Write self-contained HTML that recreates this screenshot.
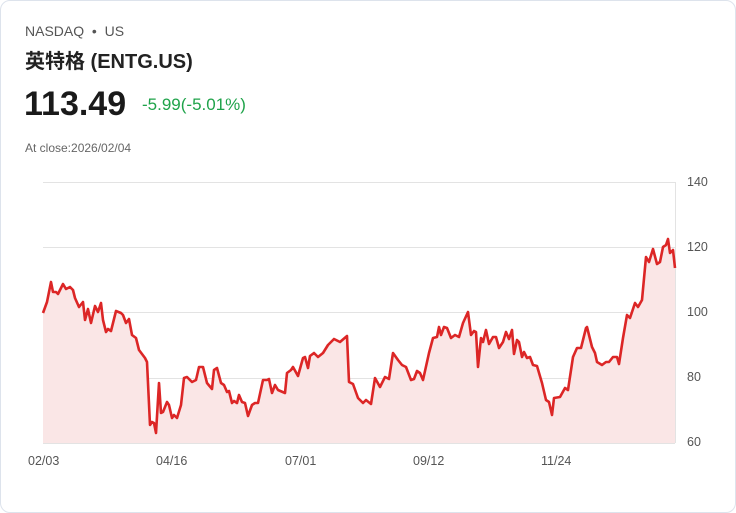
<!DOCTYPE html>
<html><head><meta charset="utf-8"><style>
body{margin:0;width:736px;height:513px;background:#fff;font-family:"Liberation Sans","Noto Sans CJK SC",sans-serif;overflow:hidden}
.card{position:absolute;left:0;top:0;width:734px;height:511px;border:1px solid #dde3ec;border-radius:10px}
.t{position:absolute;white-space:nowrap}
</style></head><body>
<div class="card"></div>
<div class="t" style="left:25px;top:23px;font-size:14px;color:#555">NASDAQ &nbsp;•&nbsp; US</div>
<div class="t" style="left:25px;top:45px;font-size:20px;font-weight:bold;color:#222">英特格 (ENTG.US)</div>
<div class="t" style="left:24px;top:85px;font-size:34px;font-weight:bold;color:#1a1a1a">113.49</div>
<div class="t" style="left:142px;top:95px;font-size:17px;color:#1fa34a">-5.99(-5.01%)</div>
<div class="t" style="left:25px;top:141px;font-size:12px;color:#666">At close:2026/02/04</div>
<svg width="736" height="513" style="position:absolute;left:0;top:0">
<g stroke="#e3e3e3" stroke-width="1">
<line x1="43" y1="182.5" x2="675" y2="182.5"/><line x1="43" y1="247.5" x2="675" y2="247.5"/><line x1="43" y1="312.5" x2="675" y2="312.5"/><line x1="43" y1="378.5" x2="675" y2="378.5"/><line x1="43" y1="443.5" x2="675" y2="443.5"/><line x1="675.5" y1="182" x2="675.5" y2="443"/>
</g>
<g font-size="12.5" fill="#555" font-family="Liberation Sans,sans-serif">
<text x="687" y="186">140</text><text x="687" y="251">120</text><text x="687" y="316">100</text><text x="687" y="381">80</text><text x="687" y="446">60</text>
<text x="28" y="465">02/03</text><text x="156" y="465">04/16</text><text x="285" y="465">07/01</text><text x="413" y="465">09/12</text><text x="541" y="465">11/24</text>
</g>
<polyline fill="#fae6e6" stroke="none" points="43,443 43,313 47,302 51,282 53,292 56,292 58,294 63,284 66,289 70,287 73,290 75,298 79,307 83,302 85,320 88,309 91,323 95,306 98,312 101,303 103,320 106,332 108,329 111,331 116,311 121,313 123,315 126,323 129,319 132,335 136,338 139,350 145,358 147,362 150,425 152,422 154,423 156,433 159,383 161,413 163,412 167,402 169,405 172,418 174,415 177,418 181,405 184,378 187,377 192,382 196,380 199,367 203,367 207,383 212,389 214,370 217,368 221,383 224,385 227,392 229,391 232,403 234,401 237,403 239,395 242,402 245,403 248,416 252,405 255,403 258,403 263,380 267,380 269,379 272,393 275,385 278,390 285,393 287,373 291,370 293,367 298,376 303,358 305,357 308,368 310,356 314,353 318,357 323,353 328,345 334,339 340,342 347,336 349,382 353,384 358,398 363,403 366,400 371,404 375,378 380,387 385,377 389,379 393,353 398,360 402,365 406,367 411,380 414,379 417,371 420,373 423,380 429,353 433,338 437,337 439,327 441,335 444,327 447,328 451,338 455,335 459,337 463,323 468,312 471,335 474,331 476,332 478,367 481,338 483,342 486,330 489,344 493,337 496,337 499,348 503,342 506,332 509,339 512,330 514,354 517,340 519,342 522,357 524,352 527,358 530,357 533,365 537,366 542,383 546,400 549,402 552,415 554,398 560,397 565,388 568,390 573,357 577,348 581,348 586,328 587,327 592,347 595,353 597,362 602,365 606,362 609,362 613,357 617,357 619,364 623,338 627,315 630,318 635,303 638,307 642,300 646,257 649,262 653,249 657,264 660,262 663,247 666,245 668,239 670,253 673,250 675,268 675,443"/>
<polyline fill="none" stroke="#dc2626" stroke-width="2.6" stroke-linejoin="round" points="43,313 47,302 51,282 53,292 56,292 58,294 63,284 66,289 70,287 73,290 75,298 79,307 83,302 85,320 88,309 91,323 95,306 98,312 101,303 103,320 106,332 108,329 111,331 116,311 121,313 123,315 126,323 129,319 132,335 136,338 139,350 145,358 147,362 150,425 152,422 154,423 156,433 159,383 161,413 163,412 167,402 169,405 172,418 174,415 177,418 181,405 184,378 187,377 192,382 196,380 199,367 203,367 207,383 212,389 214,370 217,368 221,383 224,385 227,392 229,391 232,403 234,401 237,403 239,395 242,402 245,403 248,416 252,405 255,403 258,403 263,380 267,380 269,379 272,393 275,385 278,390 285,393 287,373 291,370 293,367 298,376 303,358 305,357 308,368 310,356 314,353 318,357 323,353 328,345 334,339 340,342 347,336 349,382 353,384 358,398 363,403 366,400 371,404 375,378 380,387 385,377 389,379 393,353 398,360 402,365 406,367 411,380 414,379 417,371 420,373 423,380 429,353 433,338 437,337 439,327 441,335 444,327 447,328 451,338 455,335 459,337 463,323 468,312 471,335 474,331 476,332 478,367 481,338 483,342 486,330 489,344 493,337 496,337 499,348 503,342 506,332 509,339 512,330 514,354 517,340 519,342 522,357 524,352 527,358 530,357 533,365 537,366 542,383 546,400 549,402 552,415 554,398 560,397 565,388 568,390 573,357 577,348 581,348 586,328 587,327 592,347 595,353 597,362 602,365 606,362 609,362 613,357 617,357 619,364 623,338 627,315 630,318 635,303 638,307 642,300 646,257 649,262 653,249 657,264 660,262 663,247 666,245 668,239 670,253 673,250 675,268"/>
</svg>
</body></html>
